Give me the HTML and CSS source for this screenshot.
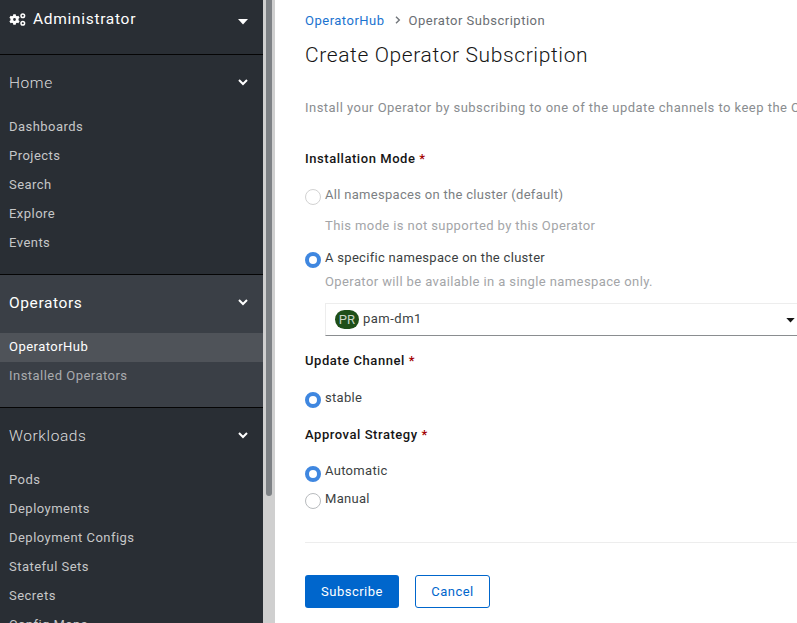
FILE: index.html
```html
<!DOCTYPE html>
<html lang="en">
<head>
<meta charset="utf-8">
<title>Create Operator Subscription</title>
<link rel="stylesheet" href="styles.css">
</head>
<body>
<div class="app">
  <nav class="sidebar">
    <div class="perspective">
      <svg class="gears" viewBox="0 0 17 13" width="17" height="13" aria-hidden="true">
        <path fill="#fff" fill-rule="evenodd" d="M4.300 1.300h2.400l.3 1.500 1 .5 1.400-.6 1.200 2-1.100 1v1.600l1.100 1-1.200 2-1.400-.6-1 .5-.3 1.500H4.300l-.3-1.500-1-.5-1.400.6-1.200-2 1.100-1V5.700l-1.100-1 1.200-2 1.400.6 1-.5zM5.500 5.100a1.400 1.400 0 1 0 0 2.800 1.400 1.400 0 0 0 0-2.800z"/>
        <circle cx="13.800" cy="2.700" r="1.800" fill="none" stroke="#fff" stroke-width="1.500"/>
        <circle cx="13.800" cy="10.300" r="1.800" fill="none" stroke="#fff" stroke-width="1.500"/>
      </svg>
      <span class="perspective-name">Administrator</span>
      <svg class="caret" viewBox="0 0 10 6" width="10" height="6" aria-hidden="true"><path fill="#fff" d="M0 0h10L5 5.500z"/></svg>
    </div>

    <section class="group">
      <div class="group-head"><span>Home</span><svg class="chev" viewBox="0 0 10 7" width="10" height="7" aria-hidden="true"><path fill="none" stroke="#fff" stroke-width="2" d="M1 1l4 4 4-4"/></svg></div>
      <ul class="items">
        <li>Dashboards</li>
        <li>Projects</li>
        <li>Search</li>
        <li>Explore</li>
        <li>Events</li>
      </ul>
    </section>

    <section class="group group-open">
      <div class="group-head"><span>Operators</span><svg class="chev" viewBox="0 0 10 7" width="10" height="7" aria-hidden="true"><path fill="none" stroke="#fff" stroke-width="2" d="M1 1l4 4 4-4"/></svg></div>
      <ul class="items items-tight">
        <li class="current">OperatorHub</li>
        <li>Installed Operators</li>
      </ul>
    </section>

    <section class="group">
      <div class="group-head"><span>Workloads</span><svg class="chev" viewBox="0 0 10 7" width="10" height="7" aria-hidden="true"><path fill="none" stroke="#fff" stroke-width="2" d="M1 1l4 4 4-4"/></svg></div>
      <ul class="items">
        <li>Pods</li>
        <li>Deployments</li>
        <li>Deployment Configs</li>
        <li>Stateful Sets</li>
        <li>Secrets</li>
        <li>Config Maps</li>
      </ul>
    </section>
  </nav>

  <div class="scrollbar"><div class="thumb"></div></div>

  <main class="main">
    <div class="crumbs">
      <a class="crumb-link">OperatorHub</a>
      <svg class="crumb-sep" viewBox="0 0 6 8" width="6" height="8" aria-hidden="true"><path fill="none" stroke="#72767b" stroke-width="1.400" d="M1 .8L4.300 4 1 7.200"/></svg>
      <span>Operator Subscription</span>
    </div>
    <h1 class="title">Create Operator Subscription</h1>
    <p class="intro">Install your Operator by subscribing to one of the update channels to keep the Operator up to date.</p>

    <h2 class="label label-mode">Installation Mode <span class="req">*</span></h2>
    <div class="radio radio-disabled">
      <span class="dot"></span><span>All namespaces on the cluster (default)</span>
    </div>
    <p class="hint hint-first">This mode is not supported by this Operator</p>
    <div class="radio radio-specific">
      <span class="dot dot-on"></span><span>A specific namespace on the cluster</span>
    </div>
    <p class="hint hint-second">Operator will be available in a single namespace only.</p>
    <div class="select">
      <span class="badge">PR</span><span class="select-text">pam-dm1</span>
      <svg class="select-caret" viewBox="0 0 10 6" width="9" height="5" aria-hidden="true"><path fill="#151515" d="M0 0h10L5 5.500z"/></svg>
    </div>

    <h2 class="label label-channel">Update Channel <span class="req">*</span></h2>
    <div class="radio radio-stable">
      <span class="dot dot-on"></span><span>stable</span>
    </div>

    <h2 class="label label-approval">Approval Strategy <span class="req">*</span></h2>
    <div class="radio radio-auto">
      <span class="dot dot-on"></span><span>Automatic</span>
    </div>
    <div class="radio radio-manual">
      <span class="dot"></span><span>Manual</span>
    </div>

    <hr class="rule">
    <div class="actions">
      <button class="btn btn-primary" type="button">Subscribe</button>
      <button class="btn btn-secondary" type="button">Cancel</button>
    </div>
  </main>
</div>
</body>
</html>
```
FILE: styles.css
```css
* { box-sizing: border-box; }
html, body { margin: 0; height: 100%; overflow: hidden; background: #fff; }
body { font-family: Roboto, sans-serif; color: #151515; }
.app { display: flex; width: 797px; height: 623px; overflow: hidden; }

.sidebar { flex: 0 0 263px; height: 623px; overflow: hidden; background: #292e34; }
.perspective { display: flex; align-items: center; height: 55px; padding: 0 15px 16px 9px; border-bottom: 1px solid #050505; color: #fff; }
.gears { flex: none; margin-right: 7px; margin-top: 1px; }
.perspective-name { flex: 1; font-size: 15.500px; letter-spacing: .7px; }
.caret { margin-top: 5px; }
.group { border-bottom: 1px solid #050505; }
.group-open { background: #3a3f46; }
.group-head { display: flex; align-items: center; justify-content: space-between; height: 56px; padding: 0 15px 0 9px; font-size: 15.500px; font-weight: 300; color: #dcdcdc; letter-spacing: .6px; }
.group-head .chev { margin-bottom: 2px; }
.group-open .group-head { color: #fff; height: 58px; font-weight: 400; padding-bottom: 3px; }
.group-open .group-head .chev { margin-bottom: 0; }
.items { list-style: none; margin: 0; padding: 2px 0 16px; }
.items li { height: 29px; line-height: 28px; padding-left: 9px; font-size: 13px; letter-spacing: .47px; color: #c6c7c8; }
.items-tight { padding: 0 0 16px; }
.items-tight li { color: #a9abae; }
.items .current { background: #4f5359; color: #fff; }

.scrollbar { flex: 0 0 12px; height: 623px; background: #cfcfcf; padding-left: 3px; }
.thumb { width: 6px; height: 496px; background: #7d8185; border-radius: 0 0 3px 3px; }

.main { flex: 1; min-width: 0; padding: 0 0 0 30px; overflow: hidden; }
.crumbs { display: flex; align-items: center; gap: 8px; height: 18px; margin-top: 11px; font-size: 13px; letter-spacing: .5px; color: #6a6e73; white-space: nowrap; }
.crumb-link { color: #1a73d0; margin-right: 2px; }
.title { margin: 11px 0 0; font-size: 21px; line-height: 30px; font-weight: 300; letter-spacing: .62px; color: #151515; white-space: nowrap; }
.intro { margin: 29px 0 0; height: 18px; line-height: 18px; font-size: 13px; letter-spacing: .47px; color: #8a8d90; white-space: nowrap; overflow: hidden; }
.label { margin: 0; height: 18px; line-height: 18px; font-size: 13px; font-weight: 500; letter-spacing: .55px; color: #151515; white-space: nowrap; }
.req { color: #a30000; }
.label-mode { margin-top: 33px; }
.label-channel { margin-top: 16px; }
.label-approval { margin-top: 20px; }
.radio { display: flex; align-items: center; gap: 4px; height: 18px; font-size: 13px; letter-spacing: .3px; color: #3c3f42; white-space: nowrap; }
.dot { flex: none; width: 16px; height: 16px; margin-top: 5px; border-radius: 50%; border: 1px solid #b8bbbe; background: #fff; }
.dot-on { border: 4.500px solid #3f87e0; background: #fff; margin-top: 5px; }
.radio-disabled { margin-top: 17px; color: #7c7f83; }
.radio-disabled .dot { border-color: #d2d2d2; }
.radio-specific { margin-top: 13px; }
.radio-stable { margin-top: 18px; }
.radio-auto { margin-top: 17px; }
.radio-auto .dot { margin-top: 7px; }
.radio-manual { margin-top: 10px; }
.radio-manual .dot { margin-top: 6px; }
.hint { margin: 0 0 0 20px; height: 18px; line-height: 18px; font-size: 13px; letter-spacing: .4px; color: #a3a5a8; white-space: nowrap; }
.hint-first { margin-top: 14px; }
.hint-second { margin-top: 7px; }
.select { position: relative; display: flex; align-items: center; gap: 4px; height: 33px; margin: 12px 0 0 20px; padding-left: 9px; border-top: 1px solid #ededed; border-left: 1px solid #ededed; border-bottom: 1px solid #8a8d90; font-size: 13px; letter-spacing: .5px; color: #3c3f42; }
.select-text { margin-bottom: 2px; }
.badge { flex: none; width: 24px; height: 19px; line-height: 19px; border-radius: 10px; background: #1e4f18; color: #c9d6c6; text-align: center; font-size: 13px; letter-spacing: .2px; }
.select-caret { position: absolute; right: 2px; top: 14px; }
.rule { height: 1px; margin: 35px 0 0; border: 0; background: #ededed; }
.actions { display: flex; gap: 16px; margin-top: 32px; }
.btn { height: 33px; padding: 0 0 1px; border-radius: 3px; font-family: inherit; font-size: 13px; letter-spacing: .5px; }
.btn-primary { width: 94px; border: 0; background: #0066cc; color: #fff; }
.btn-secondary { width: 75px; border: 1px solid #0066cc; background: #fff; color: #0066cc; }
```
